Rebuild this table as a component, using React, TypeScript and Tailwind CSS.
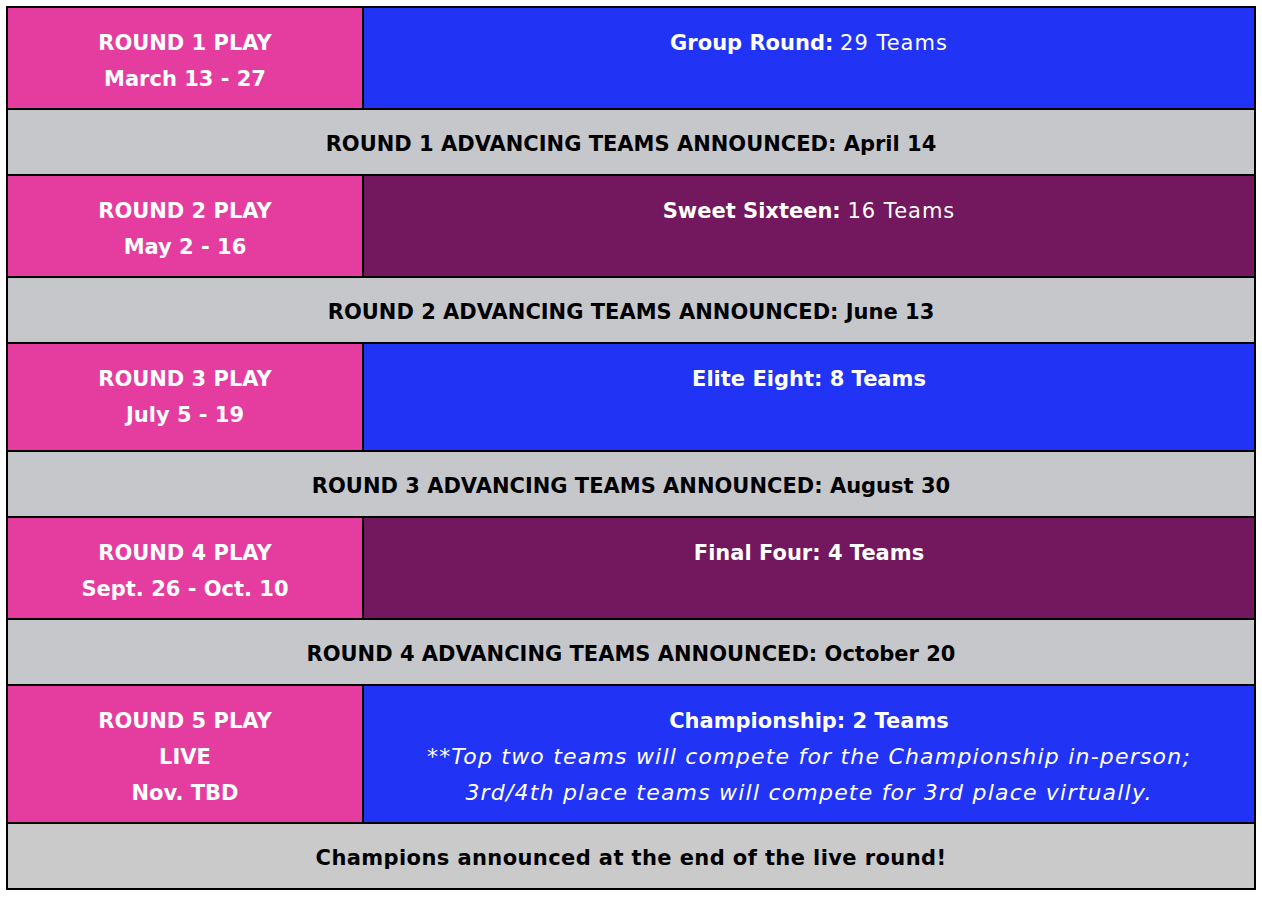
import React from 'react';

const PINK = 'bg-[#e53c9f]';
const BLUE = 'bg-[#2133f5]';
const PURPLE = 'bg-[#73175e]';

const rounds = [
  {
    left: ['ROUND 1 PLAY', 'March 13 - 27'],
    bg: BLUE,
    right: (
      <>
        <span className="font-bold">Group Round:</span>{' '}
        <span className="tracking-[1px]">29 Teams</span>
      </>
    ),
    announce: 'ROUND 1 ADVANCING TEAMS ANNOUNCED: April 14',
    pad: 'pb-[11px]',
  },
  {
    left: ['ROUND 2 PLAY', 'May 2 - 16'],
    bg: PURPLE,
    right: (
      <>
        <span className="font-bold">Sweet Sixteen:</span>{' '}
        <span className="tracking-[1px]">16 Teams</span>
      </>
    ),
    announce: 'ROUND 2 ADVANCING TEAMS ANNOUNCED: June 13',
    pad: 'pb-[11px]',
  },
  {
    left: ['ROUND 3 PLAY', 'July 5 - 19'],
    bg: BLUE,
    right: <span className="font-bold">Elite Eight: 8 Teams</span>,
    announce: 'ROUND 3 ADVANCING TEAMS ANNOUNCED: August 30',
    pad: 'pb-[17px]',
  },
  {
    left: ['ROUND 4 PLAY', 'Sept. 26 - Oct. 10'],
    bg: PURPLE,
    right: <span className="font-bold">Final Four: 4 Teams</span>,
    announce: 'ROUND 4 ADVANCING TEAMS ANNOUNCED: October 20',
    pad: 'pb-[11px]',
  },
  {
    left: ['ROUND 5 PLAY', 'LIVE', 'Nov. TBD'],
    bg: BLUE,
    right: (
      <>
        <span className="block font-bold">Championship: 2 Teams</span>
        <span className="block italic text-[22px] tracking-[1.2px]">
          **Top two teams will compete for the Championship in-person;
          <br />
          3rd/4th place teams will compete for 3rd place virtually.
        </span>
      </>
    ),
    announce: 'Champions announced at the end of the live round!',
    pad: 'pb-[11px]',
  },
];

export default function App() {
  return (
    <div className="bg-white min-h-[898px] p-[6px] font-['DejaVu_Sans',sans-serif] text-[21px] leading-[36px]">
      <table className="w-[1250px] border-collapse border-2 border-black table-fixed">
        <colgroup>
          <col className="w-[356px]" />
          <col />
        </colgroup>
        <tbody>
          {rounds.map((r, i) => (
            <React.Fragment key={i}>
              <tr>
                <td className={`${PINK} ${r.pad} border-2 border-black text-center align-top pt-[17px] font-bold text-white`}>
                  {r.left.map((l) => (
                    <div key={l}>{l}</div>
                  ))}
                </td>
                <td className={`${r.bg} ${r.pad} border-2 border-black text-center align-top pt-[17px] text-white`}>
                  {r.right}
                </td>
              </tr>
              <tr>
                <td
                  colSpan={2}
                  className={`${i === 4 ? 'bg-[#cacaca] tracking-[0.4px]' : 'bg-[#c6c7cb]'} border-2 border-black text-center pt-[16px] pb-[12px] font-bold text-black`}
                >
                  {r.announce}
                </td>
              </tr>
            </React.Fragment>
          ))}
        </tbody>
      </table>
    </div>
  );
}
